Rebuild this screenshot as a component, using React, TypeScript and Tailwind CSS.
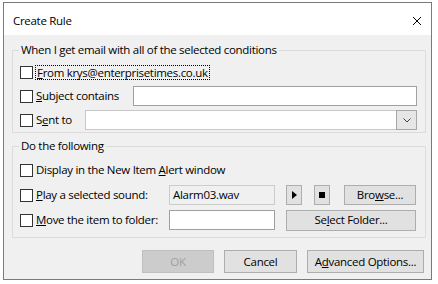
import React from "react";

function Check() {
  return <span className="block w-[13px] h-[13px] border border-[#333333] bg-white shrink-0" />;
}

function Btn({ children, className }: { children?: React.ReactNode; className: string }) {
  return (
    <div className={"flex items-center justify-center border border-[#adadad] bg-[#e1e1e1] shrink-0 " + className}>
      {children}
    </div>
  );
}

export default function App() {
  return (
    <div className="w-[438px] h-[284px] bg-white pt-[2px] pl-[3px] font-['Open_Sans',sans-serif] text-[11.5px] leading-[16px] text-black tracking-[-0.3px]">
      <div className="w-[429px] h-[278px] border border-[#7a7a7a] bg-[#f0f0f0] flex flex-col">
        {/* title bar */}
        <div className="h-[32px] bg-white flex items-center pl-[9px] pr-[9px] pt-[3px]">
          <span className="text-[11.5px]">Create Rule</span>
          <svg className="ml-auto" width="10" height="10" viewBox="0 0 10 10">
            <path d="M1 1 L9 9 M9 1 L1 9" stroke="#000" strokeWidth="1" fill="none" />
          </svg>
        </div>

        {/* body */}
        <div className="flex flex-col pl-[8px] pr-[5px] pt-[7px]">
          <fieldset className="border border-[#dcdcdc] pl-[7px] pr-[8px] pt-[4px] pb-[2px] flex flex-col gap-[4px]">
            <legend className="-ml-px px-[2px] leading-[16px]">When I get email with all of the selected conditions</legend>
            <div className="h-[20px] flex items-center">
              <Check />
              <span className="ml-[2px] px-px border border-dotted border-black leading-[13px]">
                <u>F</u>rom krys@enterprisetimes.co.uk
              </span>
            </div>
            <div className="h-[20px] flex items-center">
              <Check />
              <span className="ml-[3px]">
                <u>S</u>ubject contains
              </span>
              <div className="ml-auto w-[284px] h-[20px] bg-white border border-[#a0a0a0]" />
            </div>
            <div className="h-[20px] flex items-center">
              <Check />
              <span className="ml-[3px]">
                S<u>e</u>nt to
              </span>
              <div className="ml-auto w-[332px] h-[20px] bg-white border border-[#c8c8c8] flex justify-end">
                <div className="w-[19px] h-full -my-px -mr-px border border-[#a8a8a8] bg-[#e6e6e6] flex items-center justify-center box-content">
                  <svg width="8" height="5" viewBox="0 0 8 5">
                    <path d="M0.5 0.5 L4 4 L7.5 0.5" stroke="#444" strokeWidth="1" fill="none" />
                  </svg>
                </div>
              </div>
            </div>
          </fieldset>

          <fieldset className="mt-[5px] border border-[#dcdcdc] pl-[7px] pr-[8px] pt-[6px] pb-[7px] flex flex-col gap-[5px]">
            <legend className="-ml-px px-[2px] leading-[16px]">Do the following</legend>
            <div className="h-[20px] flex items-center">
              <Check />
              <span className="ml-[3px]">
                Display in the New Item <u>A</u>lert window
              </span>
            </div>
            <div className="h-[20px] flex items-center">
              <div className="w-[149px] flex items-center shrink-0">
                <Check />
                <span className="ml-[3px]">
                  <u>P</u>lay a selected sound:
                </span>
              </div>
              <div className="w-[106px] h-[20px] border border-[#cccccc] bg-[#f0f0f0] pl-[3px] flex items-center shrink-0">
                Alarm03.wav
              </div>
              <Btn className="ml-[11px] w-[16px] h-[20px]">
                <svg width="5" height="8" viewBox="0 0 5 8">
                  <path d="M0 0 L5 4 L0 8 Z" fill="#000" />
                </svg>
              </Btn>
              <Btn className="ml-[12px] w-[16px] h-[20px]">
                <span className="block w-[6px] h-[6px] bg-black" />
              </Btn>
              <Btn className="ml-[14px] w-[72px] h-[20px]">
                <span>
                  Bro<u>w</u>se...
                </span>
              </Btn>
            </div>
            <div className="h-[20px] flex items-center">
              <div className="w-[149px] flex items-center shrink-0">
                <Check />
                <span className="ml-[3px]">
                  <u>M</u>ove the item to folder:
                </span>
              </div>
              <div className="w-[106px] h-[20px] border border-[#a0a0a0] bg-white shrink-0" />
              <Btn className="ml-[11px] w-[130px] h-[21px]">
                <span>
                  Se<u>l</u>ect Folder...
                </span>
              </Btn>
            </div>
          </fieldset>

          <div className="mt-[12px] mr-[2px] flex justify-end gap-[10px]">
            <Btn className="w-[72px] h-[23px] !border-[#bfbfbf] !bg-[#cccccc] text-[#a0a0a0]">OK</Btn>
            <Btn className="w-[73px] h-[23px]">Cancel</Btn>
            <Btn className="w-[117px] h-[23px]">
              <span>
                A<u>d</u>vanced Options...
              </span>
            </Btn>
          </div>
        </div>
      </div>
    </div>
  );
}
